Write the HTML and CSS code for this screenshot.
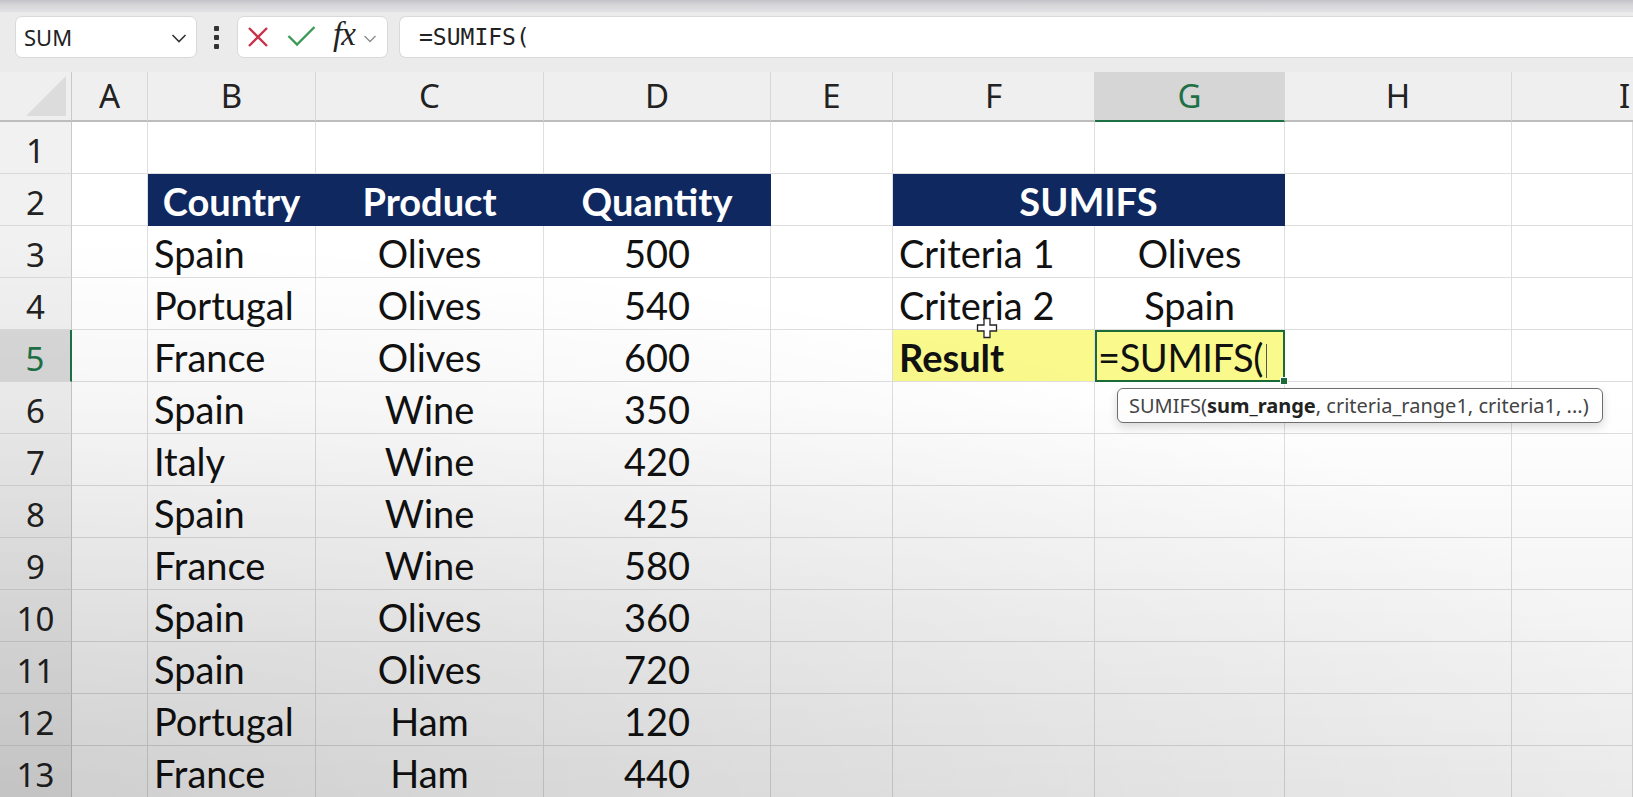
FILE: index.html
```html
<!DOCTYPE html>
<html>
<head>
<meta charset="utf-8">
<title>SUMIFS</title>
<link rel="stylesheet" href="styles.css">
</head>
<body>
<div class="topband"></div>
<div class="toolbar">
  <div class="namebox">
    <span class="nb-text">SUM</span>
    <svg class="chev" width="16" height="10" viewBox="0 0 16 10"><path d="M1.5 2 L8 8.5 L14.5 2" fill="none" stroke="#333" stroke-width="1.6"/></svg>
  </div>
  <div class="kebab"><i></i><i></i><i></i></div>
  <div class="fxbox">
    <svg class="ico-x" width="22" height="22" viewBox="0 0 22 22"><path d="M2 2 L20 20 M20 2 L2 20" stroke="#c8334c" stroke-width="2.4" fill="none"/></svg>
    <svg class="ico-ok" width="29" height="22" viewBox="0 0 29 22"><path d="M1.5 11 L10 19.5 L27.5 2" stroke="#3c9a57" stroke-width="2.4" fill="none"/></svg>
    <span class="fx">fx</span>
    <svg class="chev-s" width="14" height="9" viewBox="0 0 14 9"><path d="M1.5 2 L7 7.5 L12.5 2" fill="none" stroke="#8a8a8a" stroke-width="1.3"/></svg>
  </div>
  <div class="formula">=SUMIFS(</div>
</div>

<div class="sheet">
  <div class="corner"><span class="tri"></span></div>
  <div class="ch">A</div><div class="ch">B</div><div class="ch">C</div><div class="ch">D</div><div class="ch">E</div><div class="ch">F</div><div class="ch ch-sel">G</div><div class="ch">H</div><div class="ch ch-i">I</div>

  <div class="rh">1</div><div class="c"></div><div class="c"></div><div class="c"></div><div class="c"></div><div class="c"></div><div class="c"></div><div class="c"></div><div class="c"></div><div class="c"></div>

  <div class="rh">2</div><div class="c"></div><div class="c hdr">Country</div><div class="c hdr">Product</div><div class="c hdr">Quantity</div><div class="c"></div><div class="c hdr hdr-m">SUMIFS</div><div class="c"></div><div class="c"></div>

  <div class="rh">3</div><div class="c"></div><div class="c">Spain</div><div class="c ctr">Olives</div><div class="c ctr">500</div><div class="c"></div><div class="c">Criteria 1</div><div class="c ctr">Olives</div><div class="c"></div><div class="c"></div>

  <div class="rh">4</div><div class="c"></div><div class="c">Portugal</div><div class="c ctr">Olives</div><div class="c ctr">540</div><div class="c"></div><div class="c">Criteria 2</div><div class="c ctr">Spain</div><div class="c"></div><div class="c"></div>

  <div class="rh rh-sel">5</div><div class="c"></div><div class="c">France</div><div class="c ctr">Olives</div><div class="c ctr">600</div><div class="c"></div><div class="c yel bold">Result</div><div class="c yel active">=SUMIFS(<span class="caret"></span><span class="handle"></span></div><div class="c"></div><div class="c"></div>

  <div class="rh">6</div><div class="c"></div><div class="c">Spain</div><div class="c ctr">Wine</div><div class="c ctr">350</div><div class="c"></div><div class="c"></div><div class="c"></div><div class="c"></div><div class="c"></div>

  <div class="rh">7</div><div class="c"></div><div class="c">Italy</div><div class="c ctr">Wine</div><div class="c ctr">420</div><div class="c"></div><div class="c"></div><div class="c"></div><div class="c"></div><div class="c"></div>

  <div class="rh">8</div><div class="c"></div><div class="c">Spain</div><div class="c ctr">Wine</div><div class="c ctr">425</div><div class="c"></div><div class="c"></div><div class="c"></div><div class="c"></div><div class="c"></div>

  <div class="rh">9</div><div class="c"></div><div class="c">France</div><div class="c ctr">Wine</div><div class="c ctr">580</div><div class="c"></div><div class="c"></div><div class="c"></div><div class="c"></div><div class="c"></div>

  <div class="rh">10</div><div class="c"></div><div class="c">Spain</div><div class="c ctr">Olives</div><div class="c ctr">360</div><div class="c"></div><div class="c"></div><div class="c"></div><div class="c"></div><div class="c"></div>

  <div class="rh">11</div><div class="c"></div><div class="c">Spain</div><div class="c ctr">Olives</div><div class="c ctr">720</div><div class="c"></div><div class="c"></div><div class="c"></div><div class="c"></div><div class="c"></div>

  <div class="rh">12</div><div class="c"></div><div class="c">Portugal</div><div class="c ctr">Ham</div><div class="c ctr">120</div><div class="c"></div><div class="c"></div><div class="c"></div><div class="c"></div><div class="c"></div>

  <div class="rh">13</div><div class="c"></div><div class="c">France</div><div class="c ctr">Ham</div><div class="c ctr">440</div><div class="c"></div><div class="c"></div><div class="c"></div><div class="c"></div><div class="c"></div>
</div>

<div class="tooltip">SUMIFS(<b>sum_range</b>, criteria_range1, criteria1, ...)</div>
<svg class="cursor" width="22" height="22" viewBox="0 0 22 22"><path d="M8 1.5 H14 V8 H20.5 V14 H14 V20.5 H8 V14 H1.5 V8 H8 Z" fill="#fff" stroke="#222" stroke-width="1.3"/></svg>
<div class="vignette"></div>
</body>
</html>
```

FILE: styles.css
```css
* { box-sizing: border-box; }
html, body { margin: 0; padding: 0; }
body {
  width: 1633px;
  height: 797px;
  overflow: hidden;
  position: relative;
  background: #ffffff;
  font-family: Lato, "Noto Sans", sans-serif;
  color: #111;
}

.topband {
  height: 14px;
  background: linear-gradient(to bottom, #c4c4c8 0, #d6d6d9 5px, #e2e2e4 12px, #f3f3f3 14px);
}

.toolbar {
  height: 58px;
  background: #ebebeb;
  display: flex;
  align-items: flex-start;
  padding-top: 2px;
  overflow: hidden;
}

.namebox {
  margin-left: 15px;
  width: 182px;
  height: 42px;
  background: #fff;
  border: 1px solid #d9d9d9;
  border-radius: 7px;
  display: flex;
  align-items: center;
  justify-content: space-between;
  padding: 0 9px 0 8px;
}
.nb-text {
  font-family: "Noto Sans", sans-serif;
  font-size: 22px;
  color: #222;
}
.chev { margin-top: 2px; }

.kebab {
  margin-left: 16px;
  width: 6px;
  height: 42px;
  display: flex;
  flex-direction: column;
  align-items: center;
  justify-content: center;
  gap: 4px;
}
.kebab i {
  display: block;
  width: 5px;
  height: 5px;
  background: #333;
  border-radius: 1px;
}

.fxbox {
  margin-left: 18px;
  width: 151px;
  height: 42px;
  background: #fff;
  border: 1px solid #d9d9d9;
  border-radius: 7px;
  display: flex;
  align-items: center;
  padding-left: 9px;
}
.ico-x { margin-right: 18px; }
.ico-ok { margin-right: 17px; margin-top: -2px; }
.fx {
  font-family: "Liberation Serif", serif;
  font-style: italic;
  font-size: 33px;
  color: #222;
  margin-right: 8px;
  margin-top: -5px;
  letter-spacing: -1px;
}
.chev-s { margin-top: 3px; }

.formula {
  margin-left: 11px;
  flex: 1;
  height: 42px;
  background: #fff;
  border: 1px solid #d9d9d9;
  border-right: none;
  border-radius: 7px 0 0 7px;
  padding-left: 19px;
  font-family: "DejaVu Sans Mono", monospace;
  font-size: 23px;
  line-height: 40px;
  color: #222;
}

.sheet {
  display: grid;
  grid-template-columns: 72px 76px 168px 228px 227px 122px 202px 190px 227px 121px;
  grid-template-rows: 50px;
  grid-auto-rows: 52px;
}

.corner {
  background: #efefef;
  border-right: 1px solid #c9c9c9;
  border-bottom: 2px solid #bdbdbd;
  position: relative;
}
.tri {
  position: absolute;
  right: 5px;
  bottom: 4px;
  width: 0;
  height: 0;
  border-left: 40px solid transparent;
  border-bottom: 40px solid #dcdcdc;
}

.ch {
  background: #efefef;
  border-right: 1px solid #d7d7d7;
  border-bottom: 2px solid #bdbdbd;
  font-family: "Noto Sans", sans-serif;
  font-size: 33px;
  line-height: 48px;
  text-align: center;
  color: #222;
  overflow: hidden;
}
.ch-sel {
  background: #d6d6d6;
  color: #1e7145;
  border-bottom: 2px solid #1e7145;
}
.ch-i {
  text-align: left;
  padding-left: 107px;
  border-right: none;
}

.rh {
  background: #f1f1f1;
  border-right: 1px solid #c9c9c9;
  border-bottom: 1px solid #dadada;
  font-family: "Noto Sans", sans-serif;
  font-size: 33px;
  padding-top: 6px;
  line-height: 45px;
  text-align: center;
  color: #222;
}
.rh-sel {
  background: #d9d9d9;
  color: #1e7145;
  border-right: 2px solid #1e7145;
}

.c {
  border-right: 1px solid #dedede;
  border-bottom: 1px solid #dedede;
  font-size: 38px;
  padding: 3px 6px 0;
  line-height: 48px;
  white-space: nowrap;
  color: #111;
}
.ctr { text-align: center; }
.bold { font-weight: 700; }

.hdr {
  background: #0f2960;
  border-color: #0f2960;
  color: #fff;
  font-weight: 700;
  text-align: center;
}
.hdr-m { grid-column: span 2; }

.yel { background: #f9f98c; }

.active {
  position: relative;
  border: 2px solid #1d6a39;
  padding: 2px 0 0 1px;
  line-height: 46px;
  letter-spacing: -0.4px;
  overflow: visible;
}
.caret {
  display: inline-block;
  width: 1px;
  height: 34px;
  background: #555;
  margin-left: 3px;
  vertical-align: -6px;
}
.handle {
  position: absolute;
  right: -5px;
  bottom: -5px;
  width: 8px;
  height: 8px;
  background: #1d6a39;
  border: 1px solid #fff;
}

.tooltip {
  position: absolute;
  left: 1117px;
  top: 388px;
  width: 486px;
  height: 35px;
  background: #fff;
  border: 1px solid #6e6e6e;
  border-radius: 6px;
  box-shadow: 0 4px 10px rgba(0,0,0,0.15);
  font-family: "Noto Sans", sans-serif;
  font-size: 20px;
  line-height: 33px;
  color: #444;
  padding-left: 11px;
  white-space: nowrap;
}
.tooltip b { color: #222; }

.cursor {
  position: absolute;
  left: 976px;
  top: 317px;
}

.vignette {
  position: absolute;
  inset: 0;
  pointer-events: none;
  background:
    linear-gradient(to bottom, rgba(0,0,0,0) 50%, rgba(0,0,0,0.08) 100%),
    radial-gradient(ellipse 1700px 560px at 0% 100%, rgba(0,0,0,0.12), rgba(0,0,0,0) 100%);
}
```
